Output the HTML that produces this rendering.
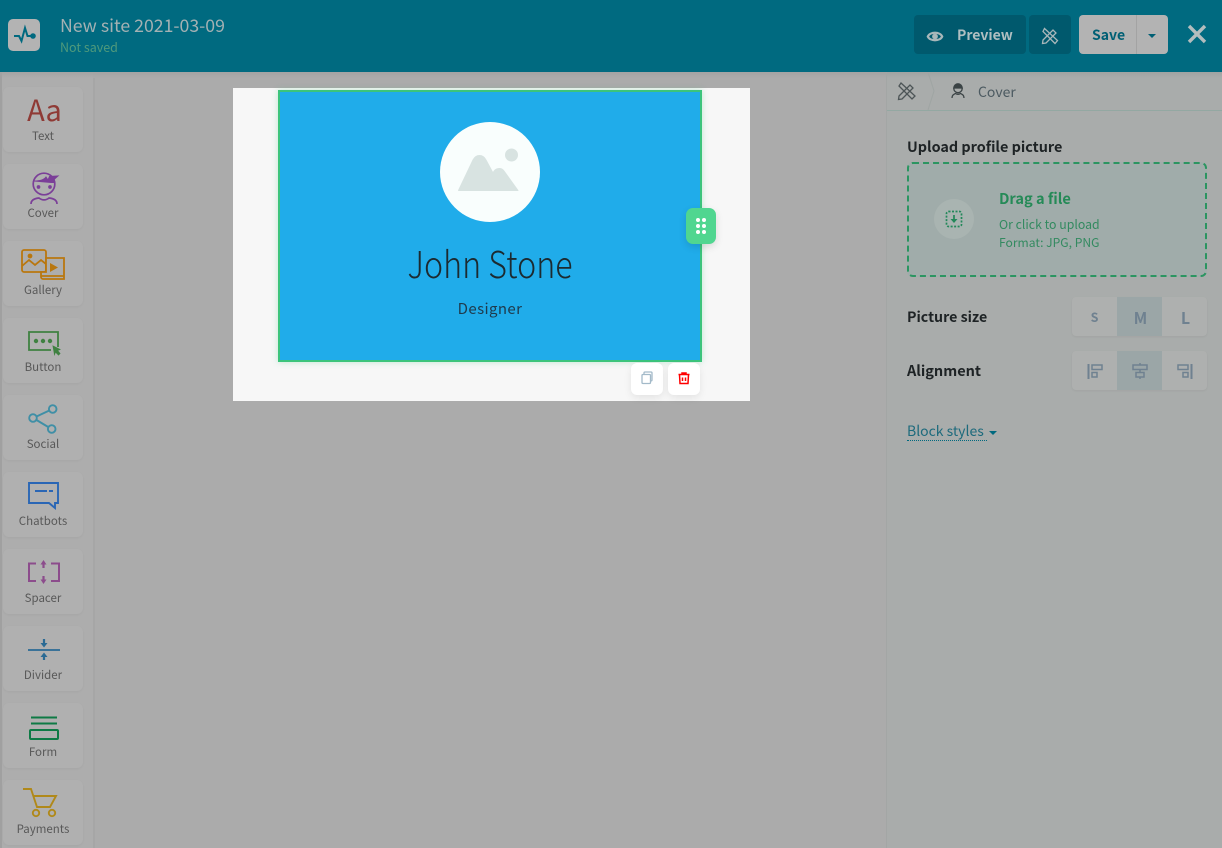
<!DOCTYPE html>
<html><head><meta charset="utf-8">
<style>
html,body{margin:0;padding:0}
body{width:1222px;height:848px;overflow:hidden;position:relative;background:#ababab;font-family:"Noto Sans CJK JP","Liberation Sans",sans-serif}
div,span,svg{position:absolute}
.t{white-space:nowrap;line-height:1}
.card{left:3px;width:80px;height:65px;background:#b0b0b0;border-radius:6px;box-shadow:0 1px 2px rgba(0,0,0,.04)}
.lab{left:0;width:80px;text-align:center;font-size:11.5px;line-height:14px;color:#585858;top:42px}
.card svg{left:0;top:0;width:80px;height:65px;fill:none}
</style></head><body>
<div style="left:0;top:0;width:93px;height:848px;background:#adadad;border-right:2px solid #a6a6a6;box-sizing:content-box"></div>
<div style="left:0;top:72px;width:2px;height:776px;background:#a0a0a0"></div>
<div style="left:886px;top:72px;width:336px;height:776px;background:#a9acab;border-left:1px solid #a3a6a5"></div>

<div class="card" style="top:87px"><svg viewBox="0 0 80 65"><text x="41.500" y="34" text-anchor="middle" font-family="'Noto Sans CJK JP','Liberation Sans',sans-serif" font-size="29" fill="#8f3a35">Aa</text></svg><div class="lab">Text</div></div>
<div class="card" style="top:164px"><svg viewBox="0 0 80 65" stroke="#7b3f98" stroke-width="1.700"><circle cx="41" cy="20" r="10.800"/><path d="M31 17c5 0 10-1 12-4l2 3 1.500-3.500 8.500-.5-4 3.500 1 3h-4z" fill="#7b3f98" stroke-width="1"/><path d="M28 40c0-4 3-5.500 8-6 3 2.500 7 2.500 10 0 5 .5 8 2 8 6"/><circle cx="35.500" cy="23" r="1" fill="#7b3f98"/><circle cx="47" cy="23" r="1" fill="#7b3f98"/></svg><div class="lab" style="top:42px">Cover</div></div>
<div class="card" style="top:241px"><svg viewBox="0 0 80 65" stroke="#b9770f" stroke-width="1.800"><rect x="19" y="9" width="24" height="22" rx="2" fill="#adadad"/><path d="M19 25l7-6 6 5 6-5 5 4"/><circle cx="27" cy="15" r="1.500" fill="#b9770f"/><path d="M43 17h18v21H40c-1 0-2-1-2-2V31h5z" fill="#adadad"/><path d="M38 35h23"/><path d="M47 22l8 4.500-8 4.500z" fill="#b9770f" stroke="none"/></svg><div class="lab">Gallery</div></div>
<div class="card" style="top:318px"><svg viewBox="0 0 80 65" stroke="#3f8141" stroke-width="1.800"><path d="M48 32H26V14h29v15"/><circle cx="33" cy="23" r="1.300" fill="#3f8141"/><circle cx="40" cy="23" r="1.300" fill="#3f8141"/><circle cx="47" cy="23" r="1.300" fill="#3f8141"/><path d="M50 28l7 3.500-2.500 1 2.500 3-1.500 1.500-3-3-1 2.500z" fill="#3f8141" stroke-width=".8"/></svg><div class="lab">Button</div></div>
<div class="card" style="top:395px"><svg viewBox="0 0 80 65" stroke="#3f8fa6" stroke-width="1.900"><circle cx="30" cy="23" r="3.800"/><circle cx="49.700" cy="14" r="3.800"/><circle cx="48.700" cy="34" r="3.800"/><path d="M33.500 21.500l12.800-6M33.500 25l11.700 7"/></svg><div class="lab">Social</div></div>
<div class="card" style="top:472px"><svg viewBox="0 0 80 65" stroke="#2a66b5" stroke-width="1.900"><path d="M26 11h29v20h-3v5l-6-5H26z"/><path d="M32 19h12M46 19h4"/></svg><div class="lab">Chatbots</div></div>
<div class="card" style="top:549px"><svg viewBox="0 0 80 65" stroke="#8c4c8c" stroke-width="2"><path d="M33 14.500h-7v17.500h7M48 14.500h8v17.500h-8"/><path d="M40.500 14v5M40.500 27v5" stroke-width="2.200"/><path d="M37.500 15.500l3-4.500 3 4.500zM37.500 30.500l3 4.500 3-4.500z" fill="#8c4c8c" stroke="none"/></svg><div class="lab" style="top:42px">Spacer</div></div>
<div class="card" style="top:626px"><svg viewBox="0 0 80 65" stroke="#2a6a94" stroke-width="1.800"><path d="M25 24h32"/><path d="M41 13v5M41 29v5" stroke-width="2.200"/><path d="M37.500 17h7l-3.500 4.500zM37.500 31h7l-3.500-4.500z" fill="#2a6a94" stroke="none"/></svg><div class="lab">Divider</div></div>
<div class="card" style="top:703px"><svg viewBox="0 0 80 65" stroke="#0e7a45" stroke-width="2"><path d="M28 14.500h26M28 20.500h26"/><rect x="27" y="27" width="28" height="9" rx="1"/></svg><div class="lab">Form</div></div>
<div class="card" style="top:780px"><svg viewBox="0 0 80 65" stroke="#b0891a" stroke-width="1.900"><path d="M20 9h8l6 18h13l6-11H30"/><circle cx="33" cy="33" r="3.200"/><circle cx="49" cy="33" r="3.200"/></svg><div class="lab">Payments</div></div>

<div style="left:93px;top:72px;width:793px;height:6px;background:linear-gradient(#a3a3a3,#ababab)"></div>
<div style="left:0;top:72px;width:93px;height:6px;background:linear-gradient(#a3a3a3,rgba(171,171,171,0))"></div>
<div style="left:887px;top:72px;width:335px;height:6px;background:linear-gradient(#a0a3a2,rgba(169,172,171,0))"></div>

<!-- header -->
<div style="left:0;top:0;width:1222px;height:72px;background:#006a80"></div>
<div style="left:8px;top:19px;width:32px;height:32px;background:#b3b3b3;border-radius:5px"></div>
<svg style="left:8px;top:19px" width="32" height="32" viewBox="0 0 32 32" fill="none" stroke="#00697f" stroke-width="2"><path d="M6 17h5l2.500 5 3.500-13 2.500 8h5"/><circle cx="25" cy="17" r="1.800" fill="#00697f"/></svg>
<div class="t" style="left:60px;top:15px;font-size:17.700px;line-height:20px;color:#a4b1b3">New site 2021-03-09</div>
<div class="t" style="left:60px;top:39px;font-size:12.500px;line-height:15px;color:#4f9a7c">Not saved</div>

<div style="left:914px;top:15px;width:112px;height:39px;background:#00596d;border-radius:4px"></div>
<svg style="left:926px;top:27px" width="18" height="18" viewBox="0 0 18 18" fill="none" stroke="#a9b7ba" stroke-width="2.200"><path d="M1.800 9.500C4 4.500 14 4.500 16.200 9.500 14 14.500 4 14.500 1.800 9.500z"/><circle cx="9" cy="9.500" r="1.800" fill="#a9b7ba"/></svg>
<div class="t" style="left:957px;top:26px;font-size:14px;line-height:18px;font-weight:700;color:#b0bfc1">Preview</div>
<div style="left:1029px;top:15px;width:42px;height:39px;background:#00596d;border-radius:4px"></div>
<svg style="left:1041px;top:27px" width="18" height="18" viewBox="0 0 18 18" fill="none" stroke="#a9b7ba" stroke-width="1.300"><path d="M2 13l10-10 3 3L5 16l-3.500.5z"/><path d="M3.500 1.500l13 12-2.500 3-12-12z"/></svg>
<div style="left:1079px;top:15px;width:89px;height:39px;background:#b3b3b3;border-radius:4px"></div>
<div style="left:1136px;top:15px;width:1px;height:39px;background:#a3a3a3"></div>
<div class="t" style="left:1092px;top:26px;font-size:14px;line-height:18px;font-weight:700;color:#005f74">Save</div>
<div style="left:1148px;top:34px;width:0;height:0;border:4px solid transparent;border-top-color:#005f74;border-bottom:0"></div>
<svg style="left:1187px;top:24px" width="20" height="20" viewBox="0 0 20 20" stroke="#b3bdbe" stroke-width="3.400"><path d="M2 2l16 16M18 2L2 18"/></svg>

<!-- canvas -->
<div style="left:233px;top:88px;width:517px;height:313px;background:#f7f7f7"></div>
<div style="left:278px;top:90px;width:424px;height:272px;box-sizing:border-box;background:#20acea;border:2px solid #3cc47c;box-shadow:0 0 6px rgba(60,196,124,.3)"></div>
<div style="left:440px;top:122px;width:100px;height:100px;border-radius:50%;background:#f9fefd"></div>
<svg style="left:440px;top:122px" width="100" height="100" viewBox="0 0 100 100"><circle cx="71.500" cy="33" r="6.500" fill="#d8e3e1"/><path d="M18.500 68.500 L33 38 C36 32 43 32 46 38 L53 51 C55 46 61 45 64 49 L78 68.500 Z" fill="#d8e3e1" stroke="#d8e3e1" stroke-linejoin="round"/></svg>
<div class="t" style="left:278px;width:424px;text-align:center;top:238px;font-size:37px;line-height:48px;font-weight:300;color:#1c2a30;transform:scaleX(.87)">John Stone</div>
<div class="t" style="left:278px;width:424px;text-align:center;top:299px;font-size:15px;line-height:20px;letter-spacing:.4px;color:#1f3a4c">Designer</div>
<div style="left:686px;top:208px;width:30px;height:36px;background:#50d690;border-radius:7px;box-shadow:0 3px 8px rgba(0,0,0,.12)"></div>
<svg style="left:686px;top:208px" width="30" height="36" viewBox="0 0 30 36" fill="#fff"><circle cx="12" cy="12" r="2"/><circle cx="18" cy="12" r="2"/><circle cx="12" cy="18" r="2"/><circle cx="18" cy="18" r="2"/><circle cx="12" cy="24" r="2"/><circle cx="18" cy="24" r="2"/></svg>
<div style="left:631px;top:363px;width:32px;height:32px;background:#fff;border-radius:6px;box-shadow:0 3px 8px rgba(0,0,0,.08)"></div>
<svg style="left:631px;top:363px" width="32" height="32" viewBox="0 0 32 32" fill="none" stroke="#a3bac9" stroke-width="1.300"><rect x="11" y="11.500" width="8.500" height="9" rx="1"/><path d="M13 11V10c0-.6.400-1 1-1h6c.6 0 1 .4 1 1v7c0 .6-.4 1-1.500 1"/></svg>
<div style="left:668px;top:363px;width:32px;height:32px;background:#fff;border-radius:6px;box-shadow:0 3px 8px rgba(0,0,0,.08)"></div>
<svg style="left:668px;top:363px" width="32" height="32" viewBox="0 0 32 32" fill="none" stroke="#f00" stroke-width="1.500"><path d="M10.500 11.500h11M14 11.500V10h4v1.500M11.500 11.500l.5 9h8l.5-9M14.500 14.500v3.500M17.500 14.500v3.500"/></svg>

<!-- right panel -->
<div style="left:887px;top:110px;width:335px;height:1px;background:#93a8a2"></div>
<svg style="left:897px;top:81px" width="20" height="20" viewBox="0 0 20 20" fill="none" stroke="#4d5557" stroke-width="1.300"><path d="M2 15L13 4l3 3L5 18l-3.500.5z"/><path d="M4 2l14 13-3 3L2 5z"/></svg>
<svg style="left:926px;top:72px" width="10" height="38" viewBox="0 0 10 38" fill="none" stroke="#9fa5a3"><path d="M2 0l6 19-6 19"/></svg>
<svg style="left:950px;top:83px" width="16" height="17" viewBox="0 0 16 17" fill="none" stroke="#3b4345" stroke-width="1.300"><circle cx="8" cy="5.500" r="4.200"/><path d="M3.800 5h8.400a4.200 4.200 0 0 0-8.400 0z" fill="#3b4345"/><path d="M2 15c0-3 1.500-3.500 3.500-4.500 1.500 1 3.500 1 5 0 2 1 3.500 1.500 3.500 4.500"/></svg>
<div class="t" style="left:978px;top:83px;font-size:14px;line-height:18px;color:#4c5a61">Cover</div>

<div class="t" style="left:907px;top:138px;font-size:14.400px;line-height:18px;font-weight:700;color:#1e2325">Upload profile picture</div>
<div style="left:907px;top:162px;width:300px;height:115px;box-sizing:border-box;background:#a0acaa;border:2px dashed #2b9561;border-radius:6px"></div>
<div style="left:934px;top:199px;width:40px;height:40px;border-radius:50%;background:#a9b4b1"></div>
<svg style="left:944px;top:209px" width="20" height="20" viewBox="0 0 20 20" fill="none" stroke="#23885a" stroke-width="1.700"><rect x="2.500" y="2.500" width="15" height="15" rx="2" stroke-dasharray="2 1.500"/><path d="M10 6v6"/><path d="M6.500 10h7l-3.500 4z" fill="#23885a" stroke="none"/></svg>
<div class="t" style="left:999px;top:190px;font-size:14.600px;line-height:18px;font-weight:700;color:#258a57">Drag a file</div>
<div class="t" style="left:999px;top:216px;font-size:12.300px;line-height:16px;color:#338a60">Or click to upload</div>
<div class="t" style="left:999px;top:235px;font-size:12.100px;line-height:16px;color:#338a60">Format: JPG, PNG</div>

<div class="t" style="left:907px;top:308px;font-size:14.200px;line-height:18px;font-weight:700;color:#1e2325">Picture size</div>
<div style="left:1072px;top:297px;width:135px;height:39px;background:#aeb0af;border-radius:4px;overflow:hidden;box-shadow:0 1px 2px rgba(0,0,0,.05)"><div style="left:45px;top:0;width:45px;height:39px;background:#9ba6a7"></div></div>
<div class="t" style="left:1072px;width:45px;text-align:center;top:308px;font-size:12.500px;line-height:18px;font-weight:700;color:#6f8190">S</div>
<div class="t" style="left:1118px;width:45px;text-align:center;top:307px;font-size:16px;line-height:20px;font-weight:700;color:#6f8190">M</div>
<div class="t" style="left:1162px;width:47px;text-align:center;top:307px;font-size:16px;line-height:20px;font-weight:700;color:#6f8190">L</div>

<div class="t" style="left:907px;top:362px;font-size:14.500px;line-height:18px;font-weight:700;color:#1e2325">Alignment</div>
<div style="left:1072px;top:351px;width:135px;height:39px;background:#aeb0af;border-radius:4px;overflow:hidden;box-shadow:0 1px 2px rgba(0,0,0,.05)"><div style="left:45px;top:0;width:45px;height:39px;background:#9ba6a7"></div></div>
<svg style="left:1087px;top:362px" width="16" height="18" viewBox="0 0 16 18" fill="none" stroke="#6f8190" stroke-width="1.500"><path d="M1.500 2v15" stroke-width="2"/><rect x="5" y="3" width="10" height="4.500"/><rect x="5" y="10.500" width="5" height="4.500"/></svg>
<svg style="left:1132px;top:362px" width="16" height="18" viewBox="0 0 16 18" fill="none" stroke="#6f8190" stroke-width="1.500"><rect x="1" y="3" width="14" height="4.500"/><rect x="4" y="10.500" width="8" height="4.500"/><path d="M8 1v2M8 7.500v3M8 15v2"/></svg>
<svg style="left:1177px;top:362px" width="16" height="18" viewBox="0 0 16 18" fill="none" stroke="#6f8190" stroke-width="1.500"><path d="M14.500 2v15" stroke-width="2"/><rect x="1" y="3" width="10" height="4.500"/><rect x="6" y="10.500" width="5" height="4.500"/></svg>

<div class="t" style="left:907px;top:422px;font-size:14px;line-height:18px;color:#1d6a7c">Block styles</div>
<div style="left:907px;top:440px;width:80px;height:0;border-top:1px dotted #00697f"></div>
<div style="left:989px;top:431px;width:0;height:0;border:4px solid transparent;border-top-color:#00697f;border-bottom:0"></div>
</body></html>
